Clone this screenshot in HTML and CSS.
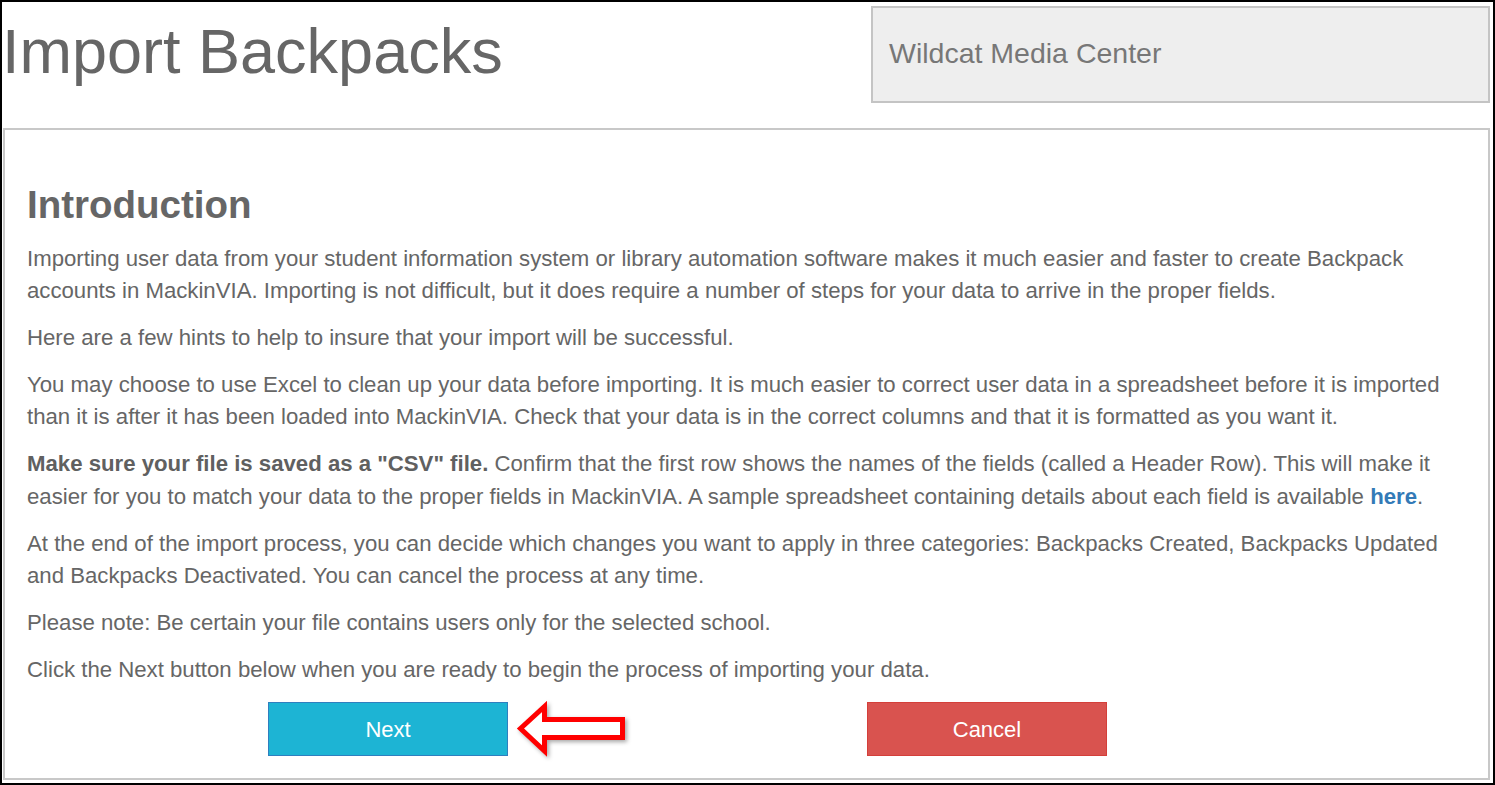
FILE: index.html
```html
<!DOCTYPE html>
<html lang="en">
  <head>
    <meta charset="UTF-8" />
    <meta name="viewport" content="width=device-width, initial-scale=1.0" />
    <title>Import Backpacks</title>

    <link rel="stylesheet" href="styles.css">
  </head>
  <body>
    <div class="frame">
      <div class="header">
        <h1 class="page-title">Import Backpacks</h1>
        <div class="school-box">Wildcat Media Center</div>
      </div>

      <div class="panel">
        <h2>Introduction</h2>

        <p>Importing user data from your student information system or library automation software makes it much easier and faster to create Backpack accounts in MackinVIA. Importing is not difficult, but it does require a number of steps for your data to arrive in the proper fields.</p>

        <p>Here are a few hints to help to insure that your import will be successful.</p>

        <p>You may choose to use Excel to clean up your data before importing. It is much easier to correct user data in a spreadsheet before it is imported than it is after it has been loaded into MackinVIA. Check that your data is in the correct columns and that it is formatted as you want it.</p>

        <p><strong>Make sure your file is saved as a "CSV" file.</strong> Confirm that the first row shows the names of the fields (called a Header Row). This will make it easier for you to match your data to the proper fields in MackinVIA. A sample spreadsheet containing details about each field is available <a href="#">here</a>.</p>

        <p>At the end of the import process, you can decide which changes you want to apply in three categories: Backpacks Created, Backpacks Updated and Backpacks Deactivated. You can cancel the process at any time.</p>

        <p>Please note: Be certain your file contains users only for the selected school.</p>

        <p>Click the Next button below when you are ready to begin the process of importing your data.</p>

        <div class="actions">
          <button class="btn btn-next" type="button">Next</button>
          <svg class="pointer" width="116" height="56" viewBox="0 0 116 56">
            <polygon points="6.5,27.5 30.5,5.5 30.5,18.5 108.5,18.5 108.5,36.5 30.5,36.5 30.5,50" fill="#fff" stroke="#ff0000" stroke-width="5" />
          </svg>
          <button class="btn btn-cancel" type="button">Cancel</button>
        </div>
      </div>
    </div>
  </body>
</html>
```

FILE: styles.css
```css
body {
  margin: 0;
  font-family: "Liberation Sans", Arial, sans-serif;
  color: #666;
  background: #fff;
}

.frame {
  width: 1495px;
  height: 785px;
  box-sizing: border-box;
  border: 2px solid #000;
  padding: 4px 3px 3px 1px;
  display: flex;
  flex-direction: column;
}

.header {
  display: flex;
  justify-content: space-between;
  align-items: flex-start;
  margin-bottom: 25px;
}

.page-title {
  margin: 14px 0 0 -1px;
  font-size: 63px;
  line-height: 62px;
  font-weight: normal;
  color: #666;
}

.school-box {
  width: 619px;
  height: 97px;
  box-sizing: border-box;
  border: 2px solid #c4c4c4;
  background-color: #eee;
  padding-left: 16px;
  padding-bottom: 2px;
  display: flex;
  align-items: center;
  font-size: 28.5px;
  color: #777;
}

.panel {
  flex: 1;
  border: 2px solid #c8c8c8;
  padding: 54px 22px 0 22px;
}

h2 {
  margin: 0 0 17px;
  font-size: 38.5px;
  line-height: 42px;
  font-weight: bold;
  color: #666;
}

p {
  margin: 0 0 15px;
  font-size: 22.2px;
  line-height: 32.1px;
}

strong {
  color: #606060;
}

a {
  color: #337ab7;
  font-weight: bold;
  text-decoration: none;
}

.actions {
  display: flex;
  align-items: center;
  margin-top: 1px;
  padding-left: 241px;
}

.btn {
  width: 240px;
  height: 54px;
  border: 1px solid;
  padding-top: 3px;
  color: white;
  font-family: "Liberation Sans", Arial, sans-serif;
  font-size: 22px;
  cursor: pointer;
}

.btn-next {
  background-color: #1db4d4;
  border-color: #2f7fbf;
}

.btn-cancel {
  background-color: #d9534f;
  border-color: #d43f3a;
  margin-left: 237px;
}

.pointer {
  margin-left: 6px;
  filter: drop-shadow(2px 2px 2px rgba(0, 0, 0, 0.35));
}
```
